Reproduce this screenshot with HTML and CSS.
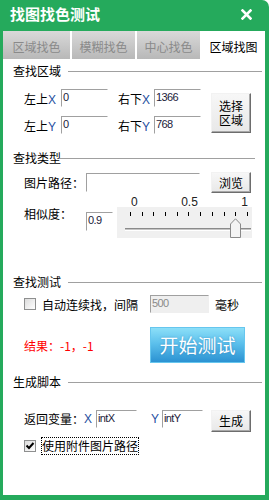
FILE: index.html
```html
<!DOCTYPE html>
<html lang="zh-CN">
<head>
    <meta charset="UTF-8">
    <title>找图找色测试</title>
    <link rel="stylesheet" href="styles.css">
</head>
<body>
    <div class="window">
        <div class="titlebar">
            <span class="title">找图找色测试</span>
            <svg class="close" width="11" height="11" viewBox="0 0 11 11">
                <path d="M1.5 1.5 L9.5 9.5 M9.5 1.5 L1.5 9.5" stroke="#fff" stroke-width="2.6" stroke-linecap="square"/>
            </svg>
        </div>

        <div class="client">
            <div class="tabs">
                <div class="tab first">区域找色</div>
                <div class="tab">模糊找色</div>
                <div class="tab">中心找色</div>
                <div class="tab active">区域找图</div>
            </div>

            <div class="panel">
                <!-- 查找区域 -->
                <div class="group-head">查找区域</div>
                <div class="area">
                    <div class="fields">
                        <div class="row">
                            <span class="lbl-a">左上<span class="xy">X</span></span>
                            <div class="field w47">0</div>
                            <span class="lbl-b">右下<span class="xy">X</span></span>
                            <div class="field w47">1366</div>
                        </div>
                        <div class="row">
                            <span class="lbl-a">左上<span class="xy">Y</span></span>
                            <div class="field w47">0</div>
                            <span class="lbl-b">右下<span class="xy">Y</span></span>
                            <div class="field w47">768</div>
                        </div>
                    </div>
                    <button class="btn btn-select">选择<br>区域</button>
                </div>

                <!-- 查找类型 -->
                <div class="group-head tight">查找类型</div>
                <div class="path-row">
                    <span class="lbl-wide">图片路径：</span>
                    <div class="field w114"></div>
                    <button class="btn btn-browse">浏览</button>
                </div>
                <div class="sim-row">
                    <span class="lbl-wide sim-label">相似度：</span>
                    <div class="field w27 sim-field">0.9</div>
                    <div class="slider">
                        <div class="scale">
                            <span>0</span>
                            <span>0.5</span>
                            <span>1</span>
                        </div>
                        <div class="track-box">
                            <div class="ticks">
                                <i></i><i></i><i></i><i></i><i></i><i></i><i></i><i></i><i></i><i></i><i></i>
                            </div>
                            <div class="rail"></div>
                            <svg class="thumb" width="11" height="20" viewBox="0 0 11 20">
                                <polygon points="0.5,6 5.5,0.8 10.5,6 10.5,19.5 0.5,19.5" fill="#f4f4f4" stroke="#8a8a8a"/>
                            </svg>
                        </div>
                    </div>
                </div>

                <!-- 查找测试 -->
                <div class="group-head test-head">查找测试</div>
                <div class="auto-row">
                    <span class="chk"></span>
                    <span class="chk-text">自动连续找，间隔</span>
                    <div class="field w59 disabled">500</div>
                    <span class="unit">毫秒</span>
                </div>
                <div class="result-row">
                    <span class="result">结果：-1，-1</span>
                    <button class="btn-start">开始测试</button>
                </div>

                <!-- 生成脚本 -->
                <div class="group-head script-head">生成脚本</div>
                <div class="var-row">
                    <span class="lbl-var">返回变量：</span>
                    <span class="xy var-x">X</span>
                    <div class="field w41">intX</div>
                    <span class="xy var-y">Y</span>
                    <div class="field w41">intY</div>
                    <button class="btn btn-gen">生成</button>
                </div>
                <div class="use-row">
                    <span class="chk">
                        <svg width="10" height="10" viewBox="0 0 10 10">
                            <path d="M1.5 4.5 L4 7 L8.5 2" fill="none" stroke="#000" stroke-width="2"/>
                        </svg>
                    </span>
                    <span class="focus-text">使用附件图片路径</span>
                </div>
            </div>
        </div>
    </div>
</body>
</html>
```

FILE: styles.css
```css
* {
    box-sizing: border-box;
}
body {
    margin: 0;
    font-family: "Noto Sans CJK SC", "Noto Sans", sans-serif;
    font-size: 12px;
    color: #000;
    background-color: #fff;
}
.window {
    width: 269px;
    height: 500px;
    background-color: #25aa5c;
    border-top-right-radius: 7px;
    display: flex;
    flex-direction: column;
    padding: 0 4px 5px 3px;
}
.titlebar {
    height: 31px;
    margin: 0 -4px 0 -3px;
    padding: 0 17px 3px 10px;
    display: flex;
    align-items: center;
    justify-content: space-between;
    color: #fff;
}
.title {
    font-size: 15px;
    font-weight: bold;
    line-height: 16px;
}
.client {
    flex: 1;
    background-color: #fff;
    display: flex;
    flex-direction: column;
}
.tabs {
    display: flex;
    gap: 2px;
    height: 28px;
}
.tab {
    width: 63px;
    padding-top: 3px;
    display: flex;
    align-items: center;
    justify-content: center;
    background: linear-gradient(#d9d9d9, #b8b8b8);
    color: #8a8a8a;
}
.tab.first {
    width: 67px;
}
.tab.active {
    background: #fff;
    color: #000;
}
.panel {
    padding: 0 3px 0 10px;
}
.group-head {
    display: flex;
    align-items: center;
    height: 16px;
    line-height: 16px;
    margin-top: 4px;
}
.group-head::after {
    content: "";
    flex: 1;
    height: 1px;
    background-color: #a0a0a0;
    margin-left: 7px;
}
.group-head.tight {
    margin-top: 16px;
}
.group-head.tight::after {
    margin-left: -1px;
    margin-right: 7px;
}
.group-head.test-head {
    margin-top: 36px;
}
.group-head.script-head {
    margin-top: 11px;
}
.xy {
    font-family: "Liberation Sans", sans-serif;
    color: #1f4fa0;
}
.field {
    height: 18px;
    border: 1px solid;
    border-color: #a0a0a0 #fff #fff #a0a0a0;
    padding: 1px 0 0 1px;
    font-family: "Liberation Sans", sans-serif;
    font-size: 11px;
    line-height: 12px;
    letter-spacing: -0.6px;
    color: #1a1a3a;
    background-color: #fff;
}
.w27 { width: 27px; height: 19px; }
.w41 { width: 41px; }
.w47 { width: 47px; }
.w59 { width: 59px; }
.w114 { width: 114px; height: 19px; }
.field.disabled {
    background-color: #efefef;
    border-color: #a0a0a0 #efefef #efefef #a0a0a0;
    color: #8a8a8a;
}
.btn {
    font-family: inherit;
    font-size: 12px;
    line-height: 12px;
    color: #000;
    padding: 0;
    border: 1px solid;
    border-color: #f2f2f2 #6d6d6d #6d6d6d #f2f2f2;
    box-shadow: inset -1px -1px 0 #a8a8a8;
    background: linear-gradient(#f7f7f7, #e8e8e8);
    display: flex;
    align-items: center;
    justify-content: center;
    text-align: center;
}

/* 查找区域 */
.area {
    display: flex;
    align-items: flex-start;
    margin-top: 10px;
    padding-left: 11px;
}
.fields {
    display: flex;
    flex-direction: column;
    gap: 9px;
}
.row {
    display: flex;
    align-items: center;
    height: 18px;
}
.lbl-a {
    width: 37px;
}
.lbl-b {
    width: 36px;
    margin-left: 10px;
}
.btn-select {
    width: 40px;
    height: 40px;
    margin: 4px 0 0 10px;
    line-height: 14px;
}

/* 查找类型 */
.path-row {
    display: flex;
    align-items: center;
    height: 21px;
    margin-top: 6px;
    padding-left: 11px;
}
.lbl-wide {
    width: 62px;
    line-height: 12px;
}
.btn-browse {
    width: 40px;
    height: 21px;
    margin-left: 11px;
}
.sim-row {
    display: flex;
    align-items: flex-start;
    margin-top: 3px;
    padding-left: 11px;
}
.sim-label {
    margin-top: 12px;
}
.sim-field {
    margin-top: 16px;
}
.slider {
    width: 135px;
    margin-left: 4px;
}
.scale {
    display: flex;
    justify-content: space-between;
    height: 11px;
    padding: 0 4px 0 14px;
    font-family: "Liberation Sans", sans-serif;
    font-size: 12px;
    line-height: 12px;
    color: #222;
}
.track-box {
    position: relative;
    height: 31px;
    background-color: #f0f0f0;
}
.ticks {
    display: flex;
    justify-content: space-between;
    padding: 5px 4px 0 13px;
}
.ticks i {
    width: 1px;
    height: 4px;
    background-color: #000;
}
.rail {
    height: 3px;
    margin: 12px 1px 0 8px;
    border-top: 1px solid #8a8a8a;
    border-bottom: 1px solid #fff;
    background-color: #c4c4c4;
}
.thumb {
    position: absolute;
    left: 113px;
    top: 11px;
}

/* 查找测试 */
.auto-row {
    display: flex;
    align-items: center;
    height: 18px;
    margin-top: 5px;
    padding-left: 11px;
}
.chk {
    width: 12px;
    height: 12px;
    border: 1px solid #8e8f8f;
    background: linear-gradient(135deg, #dcdcdc, #fff);
    display: flex;
    align-items: center;
    justify-content: center;
}
.chk-text {
    margin-left: 6px;
}
.auto-row .field {
    margin-left: 12px;
}
.unit {
    margin-left: 6px;
}
.result-row {
    display: flex;
    align-items: center;
    margin-top: 14px;
    padding-left: 11px;
}
.result {
    width: 126px;
    color: #ff0000;
}
.btn-start {
    width: 95px;
    height: 36px;
    padding: 0;
    border: 1px solid #66c6ee;
    background: linear-gradient(#8cdff8, #5cc0ec 45%, #2b92d2);
    color: #fff;
    font-family: inherit;
    font-size: 19px;
    line-height: 20px;
    text-shadow: 0 0 2px rgba(30, 100, 160, 0.5);
}

/* 生成脚本 */
.var-row {
    display: flex;
    align-items: flex-start;
    margin-top: 20px;
    padding-left: 11px;
    line-height: 18px;
}
.lbl-var {
    width: 60px;
}
.var-x {
    width: 12px;
}
.var-y {
    width: 11px;
    margin-left: 14px;
}
.btn-gen {
    width: 40px;
    height: 22px;
    margin-left: 8px;
}
.use-row {
    display: flex;
    align-items: center;
    height: 18px;
    margin-top: 5px;
    padding-left: 11px;
}
.focus-text {
    margin-left: 5px;
    border: 1px dotted #000;
    line-height: 16px;
}
```
